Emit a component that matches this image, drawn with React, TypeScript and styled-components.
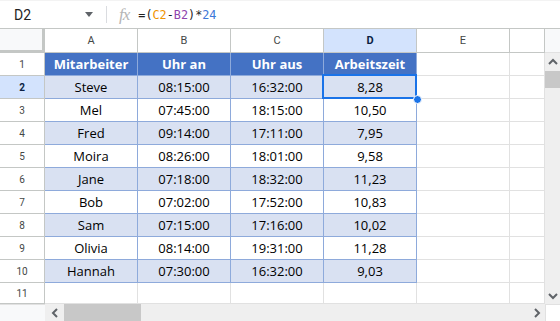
import React from 'react';
import styled, { createGlobalStyle } from 'styled-components';

const GlobalStyle = createGlobalStyle`
    html, body {
        margin: 0;
        padding: 0;
        background: #fff;
        overflow: hidden;
    }
    body {
        font-family: Roboto, "Liberation Sans", sans-serif;
    }
`

const Page = styled.div`
    width: 560px;
    height: 321px;
    display: flex;
    flex-direction: column;
    overflow: hidden;
`

const FormulaBar = styled.div`
    height: 28px;
    display: flex;
    align-items: center;
    border-top: 1px solid #f3f3f3;
    border-bottom: 1px solid #c4c7c5;
    box-sizing: content-box;
`

const NameBox = styled.div`
    width: 106px;
    display: flex;
    align-items: center;
    justify-content: space-between;
    padding: 0 13px 0 14px;
    box-sizing: border-box;
    font-size: 14px;
    color: #1f1f1f;
`

const Caret = styled.span`
    width: 0;
    height: 0;
    border-left: 4.5px solid transparent;
    border-right: 4.5px solid transparent;
    border-top: 5px solid #5f6368;
`

const Divider = styled.span`
    width: 1px;
    height: 17px;
    background: #dadce0;
`

const FxIcon = styled.span`
    font-family: "Liberation Serif", serif;
    font-style: italic;
    font-size: 17px;
    color: #b5b5b5;
    letter-spacing: -1px;
    margin: 0 9px 0 12px;
    line-height: 1;
`

const Formula = styled.span`
    font-family: "DejaVu Sans Mono", monospace;
    font-size: 11.8px;
    color: #1f1f1f;
`

const Ref = styled.span<{ $c: string }>`
    color: ${p => p.$c};
`

const Body = styled.div`
    display: flex;
`

const Grid = styled.div`
    display: grid;
    grid-template-columns: 45px repeat(5, 93px) 35px;
    grid-template-rows: 24px repeat(10, 23px) 21px;
    width: 545px;
    overflow: hidden;
`

const Corner = styled.div`
    background: #f8f9fa;
    border-right: 3px solid #c4c7c5;
    border-bottom: 3px solid #c4c7c5;
`

const ColHead = styled.div<{ $active?: boolean }>`
    display: flex;
    align-items: center;
    justify-content: center;
    font-size: 11px;
    color: ${p => p.$active ? '#0b1f44' : '#444746'};
    font-weight: ${p => p.$active ? 700 : 400};
    background: ${p => p.$active ? '#d3e3fd' : '#fff'};
    border-right: 1px solid #c4c7c5;
    border-bottom: 1px solid #c4c7c5;
`

const RowHead = styled.div<{ $active?: boolean }>`
    display: flex;
    align-items: center;
    justify-content: center;
    font-size: 10px;
    color: ${p => p.$active ? '#0b1f44' : '#444746'};
    font-weight: ${p => p.$active ? 700 : 400};
    background: ${p => p.$active ? '#d3e3fd' : '#fff'};
    border-right: 1px solid #c4c7c5;
    border-bottom: 1px solid #c4c7c5;
`

const Cell = styled.div<{ $bg?: string; $line?: string; $head?: boolean }>`
    position: relative;
    display: flex;
    align-items: center;
    justify-content: center;
    font-family: "Open Sans", sans-serif;
    font-size: 13px;
    color: ${p => p.$head ? '#fff' : '#000'};
    font-weight: ${p => p.$head ? 700 : 400};
    background: ${p => p.$bg || '#fff'};
    border-right: 1px solid ${p => p.$line || '#e1e1e1'};
    border-bottom: 1px solid ${p => p.$line || '#e1e1e1'};
`

const Selection = styled.div`
    position: absolute;
    left: -2px;
    top: -2px;
    right: -1px;
    bottom: -1px;
    border: 2px solid #1a73e8;
    pointer-events: none;
    z-index: 2;
`

const FillHandle = styled.div`
    position: absolute;
    right: -6px;
    bottom: -6px;
    width: 7px;
    height: 7px;
    border-radius: 50%;
    background: #1a73e8;
    border: 1px solid #fff;
    z-index: 3;
`

const VScroll = styled.div`
    width: 15px;
    display: flex;
    flex-direction: column;
`

const VScrollTop = styled.div`
    height: 23px;
    background: #f8f9fa;
    border-bottom: 1px solid #e1e1e1;
`

const Track = styled.div<{ $vertical?: boolean }>`
    flex: 1;
    display: flex;
    flex-direction: ${p => p.$vertical ? 'column' : 'row'};
    background: #efefef;
`

const ArrowBtn = styled.div<{ $size: number; $vertical?: boolean }>`
    ${p => p.$vertical ? `height: ${p.$size}px;` : `width: ${p.$size}px;`}
    display: flex;
    align-items: center;
    justify-content: center;
`

const Thumb = styled.div<{ $vertical?: boolean }>`
    background: #c8c8c8;
    ${p => p.$vertical ? 'height: 17px;' : 'width: 77px;'}
`

const Spacer = styled.div`
    flex: 1;
`

const HScroll = styled.div`
    height: 17px;
    display: flex;
`

const HScrollLeft = styled.div`
    width: 45px;
    background: #f8f9fa;
    border-top: 1px solid #e1e1e1;
    box-sizing: border-box;
`

const ScrollCorner = styled.div`
    width: 15px;
    background: #fff;
    border-top: 1px solid #e1e1e1;
    border-left: 1px solid #e1e1e1;
    box-sizing: border-box;
`

const Chevron = ({ dir }: { dir: 'up' | 'down' | 'left' | 'right' }) => {
    const pts = {
        up: '1,6 5,2 9,6',
        down: '1,2 5,6 9,2',
        left: '6,1 2,5 6,9',
        right: '2,1 6,5 2,9',
    }[dir];
    const vertical = dir === 'up' || dir === 'down';
    return (
        <svg width={vertical ? 10 : 8} height={vertical ? 8 : 10} viewBox={vertical ? '0 0 10 8' : '0 0 8 10'}>
            <polyline points={pts} fill="none" stroke="#5f6368" strokeWidth="2" />
        </svg>
    );
}

const rows = [
    ['Steve', '08:15:00', '16:32:00', '8,28'],
    ['Mel', '07:45:00', '18:15:00', '10,50'],
    ['Fred', '09:14:00', '17:11:00', '7,95'],
    ['Moira', '08:26:00', '18:01:00', '9,58'],
    ['Jane', '07:18:00', '18:32:00', '11,23'],
    ['Bob', '07:02:00', '17:52:00', '10,83'],
    ['Sam', '07:15:00', '17:16:00', '10,02'],
    ['Olivia', '08:14:00', '19:31:00', '11,28'],
    ['Hannah', '07:30:00', '16:32:00', '9,03'],
];

const headers = ['Mitarbeiter', 'Uhr an', 'Uhr aus', 'Arbeitszeit'];
const TABLE_LINE = '#8eaadb';

export default function App() {
    return (
        <Page>
            <GlobalStyle />
            <FormulaBar>
                <NameBox>D2<Caret /></NameBox>
                <Divider />
                <FxIcon>fx</FxIcon>
                <Formula>
                    =(<Ref $c="#f09300">C2</Ref>-<Ref $c="#8e44ad">B2</Ref>)*<Ref $c="#3c78d8">24</Ref>
                </Formula>
            </FormulaBar>
            <Body>
                <Grid>
                    <Corner />
                    {['A', 'B', 'C', 'D', 'E'].map(l => (
                        <ColHead key={l} $active={l === 'D'}>{l}</ColHead>
                    ))}
                    <ColHead />

                    <RowHead>1</RowHead>
                    {headers.map(h => (
                        <Cell key={h} $head $bg="#4472c4" $line={TABLE_LINE}>{h}</Cell>
                    ))}
                    <Cell />
                    <Cell />

                    {rows.map((r, i) => {
                        const rowNum = i + 2;
                        const shaded = rowNum % 2 === 0;
                        return (
                            <React.Fragment key={rowNum}>
                                <RowHead $active={rowNum === 2}>{rowNum}</RowHead>
                                {r.map((v, j) => (
                                    <Cell key={j} $bg={shaded ? '#d9e1f2' : '#fff'} $line={TABLE_LINE}>
                                        {v}
                                        {rowNum === 2 && j === 3 && (
                                            <>
                                                <Selection />
                                                <FillHandle />
                                            </>
                                        )}
                                    </Cell>
                                ))}
                                <Cell />
                                <Cell />
                            </React.Fragment>
                        );
                    })}

                    <RowHead>11</RowHead>
                    {[0, 1, 2, 3, 4, 5].map(k => <Cell key={k} />)}
                </Grid>
                <VScroll>
                    <VScrollTop />
                    <Track $vertical>
                        <ArrowBtn $vertical $size={18}><Chevron dir="up" /></ArrowBtn>
                        <Thumb $vertical />
                        <Spacer />
                        <ArrowBtn $vertical $size={16}><Chevron dir="down" /></ArrowBtn>
                    </Track>
                </VScroll>
            </Body>
            <HScroll>
                <HScrollLeft />
                <Track>
                    <ArrowBtn $size={19}><Chevron dir="left" /></ArrowBtn>
                    <Thumb />
                    <Spacer />
                    <ArrowBtn $size={16}><Chevron dir="right" /></ArrowBtn>
                </Track>
                <ScrollCorner />
            </HScroll>
        </Page>
    );
}
